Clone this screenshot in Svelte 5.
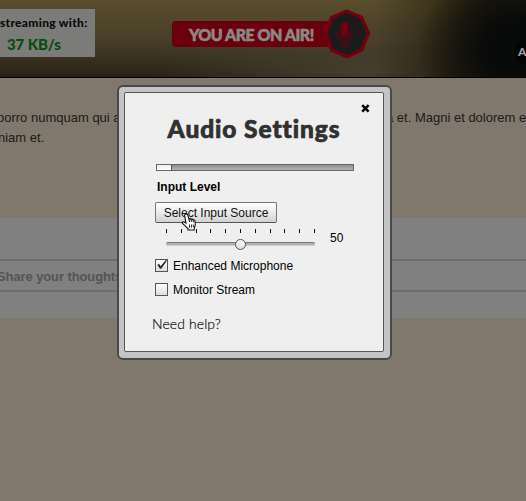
<script>
  let level = $state(50);
  let enhanced = $state(true);
  let monitor = $state(false);
  const ticks = Array.from({ length: 11 });
  const meter = 7;
</script>

<div class="page">
  <header>
    <div class="stats">
      <div class="label">streaming with:</div>
      <div class="rate">37 KB/s</div>
    </div>
    <div class="onair">
      <span>YOU ARE ON AIR!</span>
      <svg class="badge" width="48" height="52" viewBox="0 0 48 52">
        <path d="M23.5 1.3 40 8.3 47.3 25.5 40 43.3 24 50.5 7.5 43.5.7 26 7 8.5Z" fill="#74000d" />
        <path d="M23.5 4.8 37.4 10.8 43.6 25.6 37.4 41 24 46.9 10.1 41 4.3 26 9.8 11Z" fill="#1b1b1b" />
        <rect x="17.5" y="14" width="8" height="15" rx="4" fill="#70000d" />
        <path d="M14.5 23v3c0 3.7 2.8 6.2 7 6.2s7-2.5 7-6.2v-3M21.5 32v4M16 36.5h11.500" fill="none" stroke="#65000c" stroke-width="1.7" />
      </svg>
    </div>
    <div class="round"><span>A</span></div>
  </header>

  <main>
    <p class="copy"><span class="lead">porro numquam qui aut</span><span class="rest">a et. Magni et dolorem et</span></p>
    <p class="copy"><span class="second">niam et.</span></p>
    <section class="comment">
      <div class="field">Share your thoughts</div>
    </section>
  </main>

  <div class="modal">
    <div class="panel">
      <div class="closerow">
        <svg width="9" height="9" viewBox="0 0 9 9"><path d="M1.2 1.2 7.6 7.6M7.6 1.2 1.2 7.6" stroke="#000" stroke-width="2.5" /></svg>
      </div>
      <h1>Audio Settings</h1>
      <div class="meter"><div class="fill" style="width: {meter}%"></div></div>
      <div class="inputlevel">Input Level</div>
      <button>Select Input Source</button>
      <div class="volume">
        <div class="slider">
          <div class="ticks">{#each ticks as _}<i></i>{/each}</div>
          <div class="track"><div class="thumb" style="left: {level}%"></div></div>
        </div>
        <span class="value">{level}</span>
      </div>
      <label class="check">
        <span class="box">{#if enhanced}<svg width="13" height="13" viewBox="0 0 13 13"><path d="M2.2 5.8 4.3 5 5.6 7.2 10.8 1.1 12 1.5 6.3 9.7 5 9.8Z" fill="#2b2b2b" /></svg>{/if}</span>
        <span>Enhanced Microphone</span>
      </label>
      <label class="check">
        <span class="box">{#if monitor}✓{/if}</span>
        <span>Monitor Stream</span>
      </label>
      <div class="help">Need help?</div>
    </div>
  </div>

  <svg class="cursor" width="15" height="18" viewBox="0 0 15 18">
    <path d="M4.5 1.2c1-.6 2 0 2.3 1l1.2 4c.4-.8 1.8-.8 2.1.3.6-.7 1.8-.5 2 .5.8-.5 1.8 0 1.9 1l.3 3.2c.1 1.5-.4 2.4-1 3.4V17H7v-1.3c-1.5-1.2-3-3.5-5.5-5.2-.8-.8.2-2.2 1.5-1.6l2 1.2L3.6 2.7c-.2-.7.2-1.2.9-1.5Z" fill="#fff" stroke="#111" stroke-width="1.1" />
    <path d="M8 6.4 8.7 9M10.2 6.8l.6 2.2M12.2 7.4l.4 1.9M8.5 11.5v3M10.5 11.5v3M12.3 11.5v2.7" stroke="#111" stroke-width=".9" />
  </svg>
</div>

<style>
  :global(body) { margin: 0; background: #80786c; }
  .page {
    position: relative;
    width: 526px;
    height: 501px;
    overflow: hidden;
    background: #80786c;
    font-family: "Liberation Sans", Arial, sans-serif;
    color: #000;
  }
  header {
    position: relative;
    box-sizing: border-box;
    height: 78px;
    border-bottom: 1px solid #000;
    display: flex;
    align-items: flex-start;
    background:
      radial-gradient(ellipse 110px 90px at 526px 50px, #090a0a 35%, rgba(9, 10, 10, 0) 100%),
      linear-gradient(90deg, rgba(30, 25, 8, 0) 375px, rgba(30, 25, 8, .9) 485px),
      radial-gradient(ellipse 220px 60px at 370px 72px, rgba(72, 64, 48, .9), rgba(72, 64, 48, 0)),
      linear-gradient(180deg, #594d2c 0, #4a4029 50%, #292116 100%);
  }
  .stats {
    width: 95px;
    height: 48px;
    margin-top: 9px;
    background: #7b7b7a;
    font-family: Lato, sans-serif;
    font-weight: 900;
    white-space: nowrap;
  }
  .label { font-size: 12px; line-height: 14px; padding-top: 7px; letter-spacing: .3px; color: #0a0a0a; }
  .rate { font-size: 15px; line-height: 18px; padding: 5px 0 0 7px; color: #064d0b; letter-spacing: -.1px; }
  .onair {
    box-sizing: border-box;
    width: 158px;
    height: 26px;
    margin: 21px 0 0 77px;
    padding-left: 17px;
    display: flex;
    align-items: center;
    position: relative;
    border-radius: 4px;
    background: #69000c;
    color: #8b8785;
    font: 900 16px/26px Lato, sans-serif;
    letter-spacing: -.5px;
    white-space: nowrap;
    -webkit-text-stroke: .6px #8b8785;
  }
  .onair span { padding-top: 2px; }
  .badge { position: absolute; left: 151px; top: -13px; }
  .round {
    width: 24px;
    height: 24px;
    margin: 40px -12px 0 auto;
    border-radius: 50%;
    background: #030404;
    color: #a0a0a0;
    font: 900 12px/24px Lato, sans-serif;
  }
  .round span { padding-left: 4px; }
  main { padding-top: 30px; }
  .copy {
    display: flex;
    margin: 0;
    height: 20px;
    font-size: 13px;
    line-height: 20px;
    color: #1c1a19;
    white-space: nowrap;
  }
  .lead { flex: none; width: 389px; margin-left: -3px; }
  .rest { flex: none; }
  .second { margin-left: -2px; }
  .comment {
    box-sizing: border-box;
    height: 100px;
    margin-top: 70px;
    padding-top: 41px;
    background: #808080;
  }
  .field {
    height: 29px;
    border-top: 2px solid #6d6d6d;
    border-bottom: 2px solid #6d6d6d;
    font-size: 13px;
    font-weight: bold;
    line-height: 32px;
    color: #555;
    text-indent: -3px;
    letter-spacing: -.1px;
  }
  .modal {
    position: absolute;
    left: 117px;
    top: 85px;
    box-sizing: border-box;
    width: 275px;
    height: 275px;
    padding: 5px;
    border: 2px solid #4a4949;
    border-radius: 6px;
    background: #c4c3c5;
  }
  .panel {
    box-sizing: border-box;
    width: 260px;
    height: 260px;
    border: 1px solid #555;
    border-radius: 2px;
    background: #efefef;
    display: flex;
    flex-direction: column;
    align-items: flex-start;
    font-size: 12px;
    white-space: nowrap;
  }
  .closerow { align-self: stretch; display: flex; justify-content: flex-end; padding: 11px 13px 0 0; height: 9px; }
  h1 {
    align-self: stretch;
    margin: 0;
    height: 32px;
    text-align: center;
    font: 900 24.5px/32px Lato, sans-serif;
    letter-spacing: .9px;
    color: #303030;
    -webkit-text-stroke: .7px #303030;
  }
  .meter {
    box-sizing: border-box;
    width: 198px;
    height: 7px;
    margin: 19px 0 0 31px;
    border: 1px solid #666;
    background: linear-gradient(#8f8f8f, #b5b5b5);
  }
  .fill { height: 5px; background: linear-gradient(#eee, #fff); border-right: 1px solid #555; }
  .inputlevel { margin: 6px 0 0 32px; font-weight: bold; line-height: 20px; }
  button {
    box-sizing: border-box;
    width: 122px;
    height: 21px;
    margin: 5px 0 0 30px;
    padding: 1px 0 0;
    border: 1px solid #777;
    border-bottom-color: #555;
    border-radius: 2px;
    background: linear-gradient(#fff, #eee 40%, #d2d2d2);
    color: #111;
    font: 12px/18px "Liberation Sans", Arial, sans-serif;
  }
  .volume { display: flex; height: 36px; margin-left: 41px; }
  .slider { width: 149px; padding-top: 6px; }
  .ticks { display: flex; justify-content: space-between; height: 4px; }
  .ticks i { width: 1px; background: #111; }
  .track {
    position: relative;
    height: 2px;
    margin-top: 9px;
    border-top: 1px solid #777;
    border-bottom: 1px solid #ccc;
    border-radius: 2px;
    background: #b2b2b2;
    box-sizing: content-box;
  }
  .thumb {
    position: absolute;
    box-sizing: border-box;
    width: 11px;
    height: 11px;
    margin: -4px 0 0 -5.5px;
    border: 1px solid #555;
    border-radius: 50%;
    background: linear-gradient(#fff, #ddd);
  }
  .value { margin-left: 15px; line-height: 30px; }
  .check { display: flex; height: 13px; margin: 0 0 11px 30px; gap: 5px; line-height: 14px; }
  .box {
    box-sizing: border-box;
    width: 13px;
    height: 13px;
    border: 1px solid #555;
    background: linear-gradient(#fff, #ddd);
  }
  .box svg { display: block; margin: -1px; }
  .help { margin: 7px 0 0 27px; font: 300 14px/20px Lato, sans-serif; color: #111; letter-spacing: .1px; -webkit-text-stroke: .2px #111; }
  .cursor { position: absolute; left: 181px; top: 213px; }
</style>
